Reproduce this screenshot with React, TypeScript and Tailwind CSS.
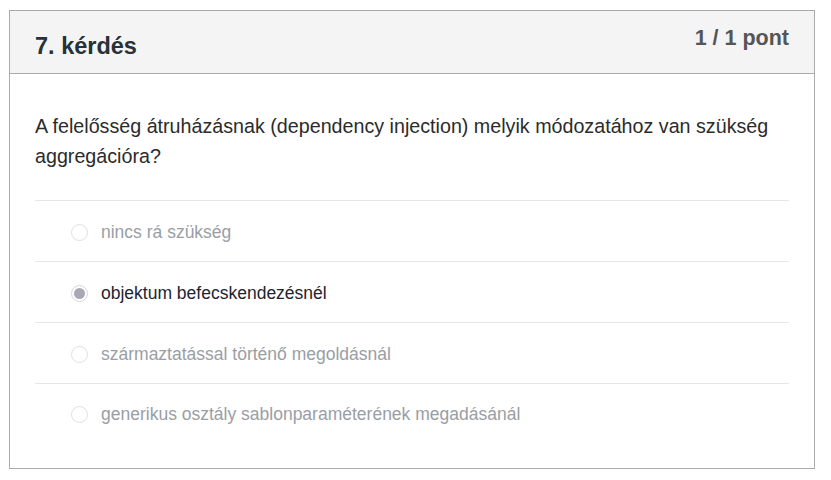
const OPTIONS = [
  { label: 'nincs rá szükség', checked: false },
  { label: 'objektum befecskendezésnél', checked: true },
  { label: 'származtatással történő megoldásnál', checked: false },
  { label: 'generikus osztály sablonparaméterének megadásánál', checked: false },
];

function Radio({ checked }: { checked: boolean }) {
  if (checked) {
    return (
      <span className="flex h-[17px] w-[17px] shrink-0 items-center justify-center rounded-full border border-[#d6d6dc] bg-white">
        <span className="h-[11px] w-[11px] rounded-full bg-[#a9a9b3]" />
      </span>
    );
  }
  return <span className="h-[17px] w-[17px] shrink-0 rounded-full border border-[#e0e0e0] bg-white" />;
}

export default function App() {
  return (
    <div className="min-h-[480px] bg-white pl-[9px] pt-[10px] font-['Liberation_Sans',Arial,sans-serif]">
      <div className="w-[806px] border border-[#aaaaaa] bg-white">
        <div className="flex h-[63px] items-start justify-between border-b border-[#aaaaaa] bg-[#f4f4f4] px-[25px]">
          <h2 className="mt-[21px] text-[23.5px] font-bold leading-7 text-[#263238]">7. kérdés</h2>
          <span className="mt-[15px] text-[21.5px] font-bold leading-6 text-[#555555]">1 / 1 pont</span>
        </div>
        <div className="px-[25px] pb-[25px] pt-[37px]">
          <p className="mb-[29px] text-[19.7px] leading-[30px] text-[#2b2b2b]">
            A felelősség átruházásnak (dependency injection) melyik módozatához van szükség aggregációra?
          </p>
          <div>
            {OPTIONS.map((opt) => (
              <div
                key={opt.label}
                className="flex h-[61px] items-center border-t border-[#e6e6e6] pl-[36px] pt-[2px] last:h-[60px]"
              >
                <Radio checked={opt.checked} />
                <span
                  className={
                    opt.checked
                      ? 'ml-[13px] text-[17.5px] text-[#1f2430]'
                      : 'ml-[13px] text-[17.5px] text-[#999ea5]'
                  }
                >
                  {opt.label}
                </span>
              </div>
            ))}
          </div>
        </div>
      </div>
    </div>
  );
}
